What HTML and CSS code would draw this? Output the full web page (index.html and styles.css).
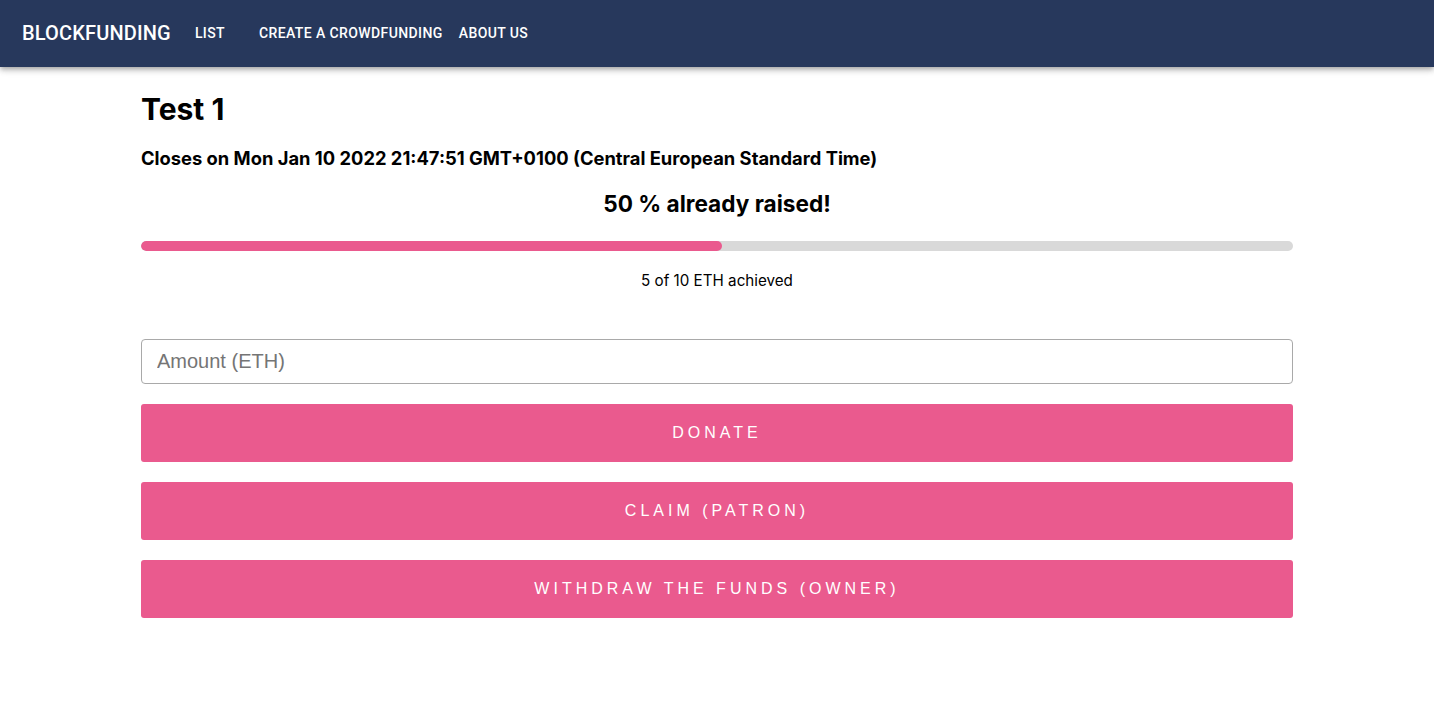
FILE: index.html
```html
<!DOCTYPE html>
<html>
<head>
<meta charset="utf-8">
<link rel="stylesheet" href="styles.css">
</head>
<body>
<header class="appbar">
  <div class="brand">BLOCKFUNDING</div>
  <nav class="nav">
    <a class="nav-btn">LIST</a>
    <a class="nav-btn">CREATE A CROWDFUNDING</a>
    <a class="nav-btn">ABOUT US</a>
  </nav>
</header>
<main class="page">
  <h1 class="title">Test 1</h1>
  <h2 class="closes">Closes on Mon Jan 10 2022 21:47:51 GMT+0100 (Central European Standard Time)</h2>
  <h3 class="raised">50 % already raised!</h3>
  <div class="bar"><div class="bar-fill" style="width: 50.4%"></div></div>
  <p class="achieved">5 of 10 ETH achieved</p>
  <form class="form">
    <input class="amount" type="text" placeholder="Amount (ETH)">
    <button type="button" class="btn">DONATE</button>
    <button type="button" class="btn">CLAIM (PATRON)</button>
    <button type="button" class="btn">WITHDRAW THE FUNDS (OWNER)</button>
  </form>
</main>
</body>
</html>
```
FILE: styles.css
```css
html, body { margin: 0; padding: 0; background: #fff; }
body { font-family: Inter, "Noto Sans", sans-serif; color: #000; }

.appbar {
  height: 67px;
  background: #27385c;
  display: flex;
  align-items: center;
  padding-left: 22px;
  padding-bottom: 2px;
  box-sizing: border-box;
  box-shadow: 0 2px 4px -1px rgba(0,0,0,0.2), 0 4px 5px 0 rgba(0,0,0,0.14), 0 1px 10px 0 rgba(0,0,0,0.12);
  position: relative;
  z-index: 1;
}
.brand {
  font-family: Roboto, sans-serif;
  font-weight: 500;
  font-size: 20px;
  letter-spacing: 0.15px;
  color: #fff;
  margin-right: 16px;
}
.nav { display: flex; }
.nav-btn {
  font-family: Roboto, sans-serif;
  font-weight: 500;
  font-size: 14px;
  letter-spacing: 0.4px;
  color: #fff;
  min-width: 64px;
  box-sizing: border-box;
  padding: 6px 8px;
  line-height: 24px;
}

.page {
  max-width: 1152px;
  margin: 0 auto;
  padding-top: 24px;
}
.title {
  margin: 0;
  font-size: 30px;
  font-weight: 700;
  line-height: 36px;
}
.closes {
  margin: 19px 0 0;
  font-size: 18.35px;
  font-weight: 700;
  line-height: 24px;
}
.raised {
  margin: 19px 0 0;
  text-align: center;
  font-size: 22.6px;
  font-weight: 700;
  line-height: 30px;
}
.bar {
  margin-top: 22px;
  height: 10px;
  border-radius: 5px;
  background: #d9d9d9;
  overflow: hidden;
}
.bar-fill {
  height: 100%;
  border-radius: 5px;
  background: #ea5a8e;
}
.achieved {
  margin: 19px 0 0;
  text-align: center;
  font-size: 15.2px;
  line-height: 22px;
}
.form {
  margin-top: 47px;
  display: flex;
  flex-direction: column;
  gap: 20px;
}
.amount {
  height: 45px;
  box-sizing: border-box;
  border: 1px solid #a9a9a9;
  border-radius: 4px;
  padding: 0 15px;
  font-family: "Liberation Sans", Arial, sans-serif;
  font-size: 20px;
  color: #333;
  outline: none;
}
.amount::placeholder { color: #757575; }
.btn {
  height: 58px;
  border: none;
  border-radius: 3px;
  background: #ea5a8e;
  color: #fff;
  font-family: "Liberation Sans", Arial, sans-serif;
  font-size: 16px;
  letter-spacing: 4px;
  padding: 0;
  cursor: pointer;
}
```
